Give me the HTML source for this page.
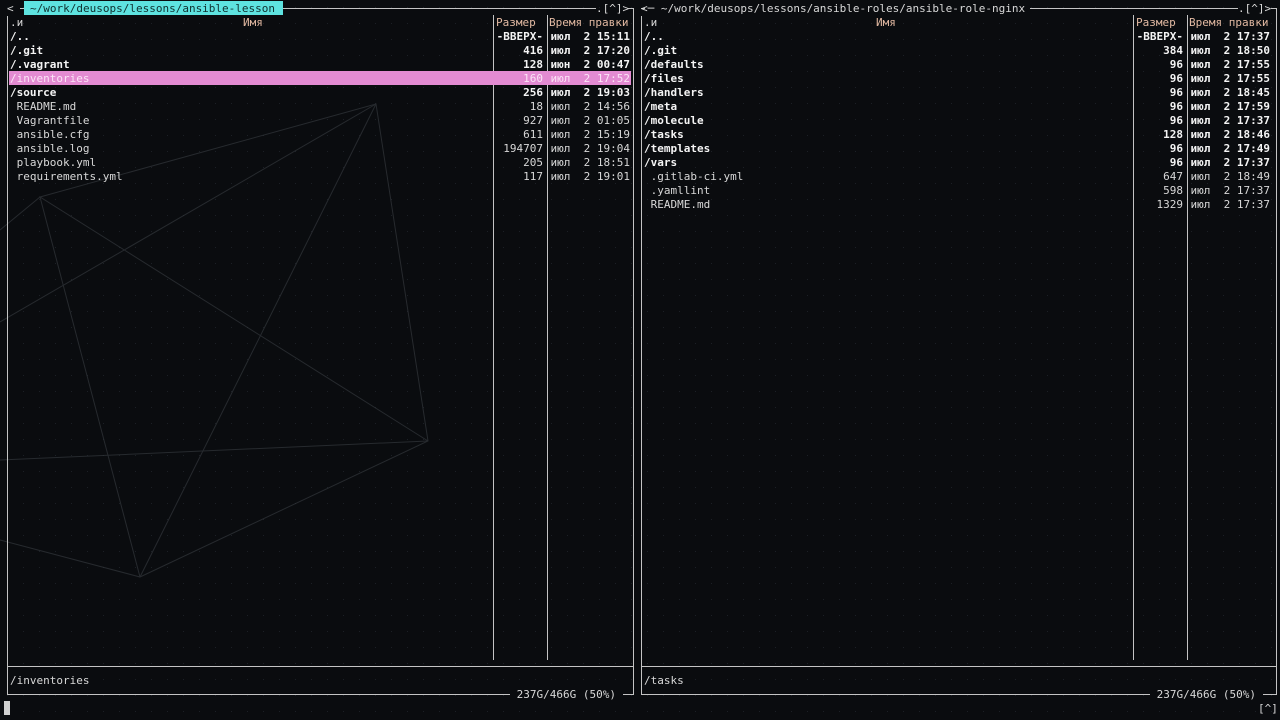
<!DOCTYPE html>
<html><head><meta charset="utf-8"><style>
html,body{margin:0;padding:0;width:1280px;height:720px;overflow:hidden;background:#0a0c0f}
.t{position:absolute;font-family:"DejaVu Sans Mono","Liberation Mono",monospace;font-size:11px;line-height:14px;white-space:pre;color:#d8d8d8;margin-top:1px}
.b{font-weight:bold;color:#f4f4f4}
.h{color:#e2b9a2}
.r{text-align:right}
svg{position:absolute;left:0;top:0}
</style></head><body>
<svg width="1280" height="720">
<defs><pattern id="d" width="16" height="16" patternUnits="userSpaceOnUse"><rect x="7" y="7" width="1" height="1" fill="#1c2026"/></pattern></defs>
<rect width="1280" height="720" fill="url(#d)"/>
<g stroke="#33373c" stroke-width="1" fill="none" opacity="0.7">
<polyline points="40,197 376,104 428,441 140,577 40,197 428,441"/>
<line x1="376" y1="104" x2="140" y2="577"/>
<line x1="0" y1="322" x2="376" y2="104"/>
<line x1="0" y1="460" x2="428" y2="441"/>
<line x1="0" y1="540" x2="140" y2="577"/>
<line x1="40" y1="197" x2="0" y2="230"/>
</g>
<g stroke="#c4c4c4" stroke-width="1" fill="none">
<path d="M7.5,16 V694.5 H633.5 V8.5 H628"/>
<line x1="20" y1="8.5" x2="24" y2="8.5"/>
<line x1="283" y1="8.5" x2="596" y2="8.5"/>
<line x1="7" y1="666.5" x2="633" y2="666.5"/>
<line x1="493.5" y1="15" x2="493.5" y2="660"/>
<line x1="547.5" y1="15" x2="547.5" y2="660"/>
<path d="M641.5,16 V694.5 H1276.5 V8.5 H1271"/>
<line x1="641" y1="8.5" x2="645" y2="8.5"/>
<line x1="1030" y1="8.5" x2="1238" y2="8.5"/>
<line x1="641" y1="666.5" x2="1276" y2="666.5"/>
<line x1="1133.5" y1="15" x2="1133.5" y2="660"/>
<line x1="1187.5" y1="15" x2="1187.5" y2="660"/>
</g>
<rect x="9" y="71" width="622" height="14" fill="#e38bd2"/>
<rect x="24" y="1" width="259" height="14" fill="#5ee3e0"/>
<rect x="4" y="701" width="6" height="14" fill="#d0d0d0"/>
</svg>
<div class="t" style="left:7px;top:1px">&lt;</div>
<div class="t" style="left:30px;top:1px;color:#10302f">~/work/deusops/lessons/ansible-lesson</div>
<div class="t" style="left:596px;top:1px">.[^]&gt;</div>
<div class="t" style="left:641px;top:1px">&lt;─ ~/work/deusops/lessons/ansible-roles/ansible-role-nginx</div>
<div class="t" style="left:1238px;top:1px">.[^]&gt;</div>

<div class="t" style="left:10px;top:15px">.и</div>
<div class="t h" style="left:243px;top:15px">Имя</div>
<div class="t h" style="left:496px;top:15px">Размер</div>
<div class="t h" style="left:549px;top:15px">Время правки</div>
<div class="t" style="left:644px;top:15px">.и</div>
<div class="t h" style="left:876px;top:15px">Имя</div>
<div class="t h" style="left:1136px;top:15px">Размер</div>
<div class="t h" style="left:1189px;top:15px">Время правки</div>

<div class="t b" style="left:10px;top:29px">/..
/.git
/.vagrant
<span style="color:#fbe4f6;font-weight:normal">/inventories</span>
/source</div>
<div class="t" style="left:10px;top:99px"> README.md
 Vagrantfile
 ansible.cfg
 ansible.log
 playbook.yml
 requirements.yml</div>
<div class="t b r" style="left:440px;width:103px;top:29px">-ВВЕРХ-
416
128
<span style="color:#fbe4f6;font-weight:normal">160</span>
256</div>
<div class="t r" style="left:440px;width:103px;top:99px">18
927
611
194707
205
117</div>
<div class="t b r" style="left:530px;width:100px;top:29px">июл  2 15:11
июл  2 17:20
июн  2 00:47
<span style="color:#fbe4f6;font-weight:normal">июл  2 17:52</span>
июл  2 19:03</div>
<div class="t r" style="left:530px;width:100px;top:99px">июл  2 14:56
июл  2 01:05
июл  2 15:19
июл  2 19:04
июл  2 18:51
июл  2 19:01</div>

<div class="t b" style="left:644px;top:29px">/..
/.git
/defaults
/files
/handlers
/meta
/molecule
/tasks
/templates
/vars</div>
<div class="t" style="left:644px;top:169px"> .gitlab-ci.yml
 .yamllint
 README.md</div>
<div class="t b r" style="left:1080px;width:103px;top:29px">-ВВЕРХ-
384
96
96
96
96
96
128
96
96</div>
<div class="t r" style="left:1080px;width:103px;top:169px">647
598
1329</div>
<div class="t b r" style="left:1170px;width:100px;top:29px">июл  2 17:37
июл  2 18:50
июл  2 17:55
июл  2 17:55
июл  2 18:45
июл  2 17:59
июл  2 17:37
июл  2 18:46
июл  2 17:49
июл  2 17:37</div>
<div class="t r" style="left:1170px;width:100px;top:169px">июл  2 18:49
июл  2 17:37
июл  2 17:37</div>

<div class="t" style="left:10px;top:673px">/inventories</div>
<div class="t" style="left:644px;top:673px">/tasks</div>
<div class="t" style="left:510px;top:687px;background:#0a0c0f"> 237G/466G (50%) </div>
<div class="t" style="left:1150px;top:687px;background:#0a0c0f"> 237G/466G (50%) </div>
<div class="t" style="left:1258px;top:701px">[^]</div>
</body></html>
